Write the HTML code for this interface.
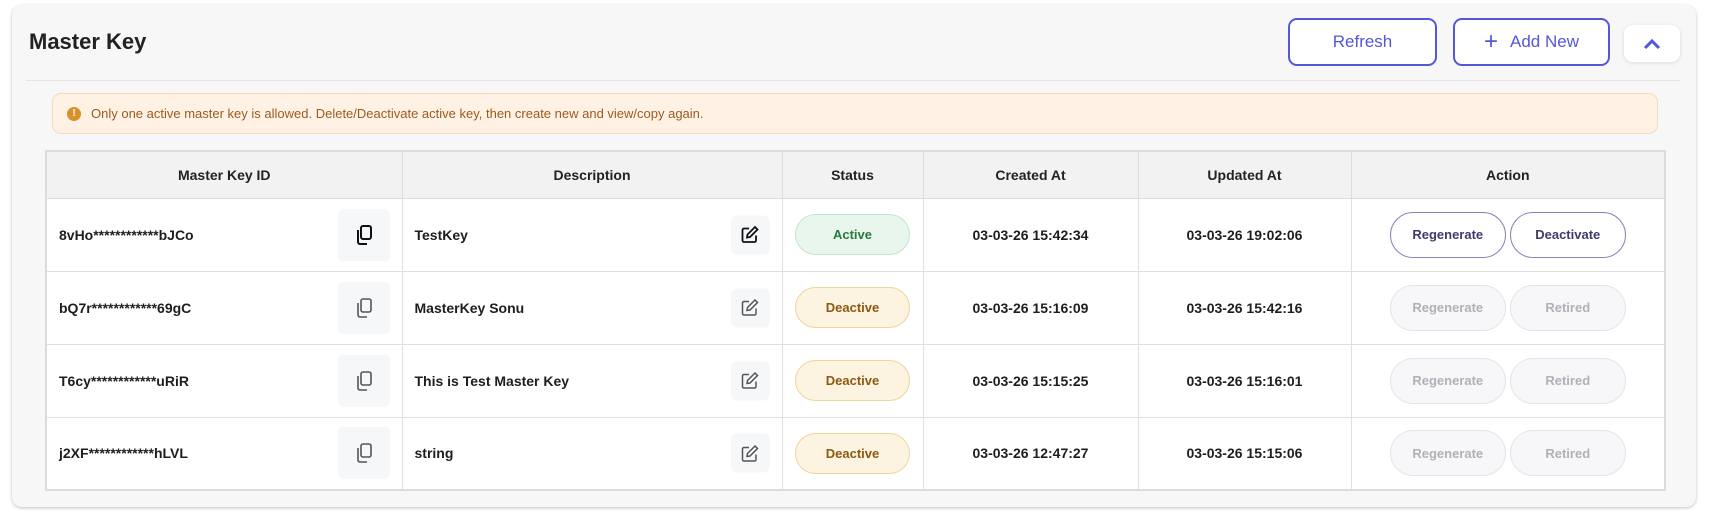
<!DOCTYPE html>
<html><head><meta charset="utf-8"><style>
*{box-sizing:border-box;margin:0;padding:0}
body{width:1713px;height:517px;background:#fff;font-family:"Segoe UI","Liberation Sans",sans-serif;position:relative;overflow:hidden}
.card{position:absolute;left:12px;top:5px;width:1684px;height:502px;background:#f7f7f7;border-radius:10px;box-shadow:0 1px 3px rgba(0,0,0,.25)}
.title{position:absolute;left:29px;top:29px;font-size:22px;font-weight:600;color:#222}
.btn{position:absolute;top:18px;height:48px;border:2px solid #5457d6;border-radius:9px;background:#fff;color:#5457d6;font-size:17px;display:flex;align-items:center;justify-content:center;font-family:"Liberation Sans",sans-serif}
.chev{position:absolute;left:1624px;top:25px;width:56px;height:37px;background:#fff;border-radius:9px;box-shadow:0 1px 4px rgba(0,0,0,.12);display:flex;align-items:center;justify-content:center}
.div{position:absolute;left:26px;top:80px;width:1654px;height:1px;background:#e3e3e3}
.alert{position:absolute;left:52px;top:93px;width:1606px;height:41px;background:#fff2e4;border:1px solid #f5dab6;border-radius:9px;display:flex;align-items:center;padding-left:14px;font-size:13px;color:#9a5b1e}
.alert .ic{width:14px;height:14px;border-radius:50%;background:#d8922c;color:#fff;font-size:10px;font-weight:bold;display:flex;align-items:center;justify-content:center;margin-right:10px}
table{position:absolute;left:45px;top:150px;width:1619px;border-collapse:collapse;background:#fff;border:2px solid #dcdcdc;table-layout:fixed}
th{height:47px;background:#f2f2f2;font-size:14px;font-weight:600;color:#222;border:1px solid #dcdcdc}
td{height:73px;border:1px solid #e0e0e0;font-size:14px;font-weight:600;color:#1e1e1e;text-align:center;position:relative}
td.l{text-align:left;padding-left:12px}
.ib{position:absolute;top:50%;transform:translateY(-50%);background:#f6f7f9;border-radius:6px;display:flex;align-items:center;justify-content:center}
.cp{right:12px;width:52px;height:52px}
.ed{right:12px;width:39px;height:39px}
.pill{display:inline-flex;align-items:center;justify-content:center;width:115px;height:41px;border-radius:21px;font-size:13px;font-weight:600}
.act{background:#e8f6ed;border:1px solid #c2e6cd;color:#2a7a3e}
.dea{background:#fdf3e1;border:1px solid #f1d49a;color:#8a5a10}
.ab{display:inline-flex;align-items:center;justify-content:center;width:116px;height:46px;border-radius:23px;font-size:13px;font-weight:600;margin:0 2px}
.on{border:1px solid #8a84b8;color:#3f3b6e;background:#fff}
.off{border:1px solid #e4e4ea;color:#b0b0b8;background:#f7f7f9}
</style></head><body>
<div class="card"></div>
<div class="title">Master Key</div>
<div class="btn" style="left:1288px;width:149px">Refresh</div>
<div class="btn" style="left:1453px;width:157px"><span style="font-size:24px;margin-right:12px;line-height:1">+</span>Add New</div>
<div class="chev"><svg width="18" height="12" viewBox="0 0 18 12"><path d="M2 10 L9 3 L16 10" stroke="#5457d6" stroke-width="3" fill="none"/></svg></div>
<div class="div"></div>
<div class="alert"><div class="ic">!</div>Only one active master key is allowed. Delete/Deactivate active key, then create new and view/copy again.</div>
<table>
<colgroup><col style="width:356px"><col style="width:380px"><col style="width:141px"><col style="width:215px"><col style="width:213px"><col style="width:314px"></colgroup>
<tr><th>Master Key ID</th><th>Description</th><th>Status</th><th>Created At</th><th>Updated At</th><th>Action</th></tr>
<tr><td class="l">8vHo************bJCo<div class="ib cp"><svg width="20" height="22" viewBox="0 0 20 22"><rect x="7" y="2" width="10" height="13" rx="2" fill="none" stroke="#111" stroke-width="2"/><path d="M4 6 V18 a2 2 0 0 0 2 2 H13" fill="none" stroke="#111" stroke-width="2"/></svg></div></td>
<td class="l">TestKey<div class="ib ed"><svg width="18" height="18" viewBox="0 0 18 18"><path d="M8 3 H3 a1.5 1.5 0 0 0 -1.5 1.5 V15 a1.5 1.5 0 0 0 1.5 1.5 H13.5 a1.5 1.5 0 0 0 1.5 -1.5 V10" fill="none" stroke="#111" stroke-width="1.8"/><path d="M14 1.5 L16.5 4 L9 11.5 L6 12 L6.5 9 Z" fill="none" stroke="#111" stroke-width="1.8"/></svg></div></td>
<td><span class="pill act">Active</span></td><td>03-03-26 15:42:34</td><td>03-03-26 19:02:06</td>
<td><span class="ab on">Regenerate</span><span class="ab on">Deactivate</span></td></tr>
<tr><td class="l">bQ7r************69gC<div class="ib cp"><svg width="20" height="22" viewBox="0 0 20 22"><rect x="7" y="2" width="10" height="13" rx="2" fill="none" stroke="#555" stroke-width="1.6"/><path d="M4 6 V18 a2 2 0 0 0 2 2 H13" fill="none" stroke="#555" stroke-width="1.6"/></svg></div></td>
<td class="l">MasterKey Sonu<div class="ib ed"><svg width="18" height="18" viewBox="0 0 18 18"><path d="M8 3 H3 a1.5 1.5 0 0 0 -1.5 1.5 V15 a1.5 1.5 0 0 0 1.5 1.5 H13.5 a1.5 1.5 0 0 0 1.5 -1.5 V10" fill="none" stroke="#555" stroke-width="1.5"/><path d="M14 1.5 L16.5 4 L9 11.5 L6 12 L6.5 9 Z" fill="none" stroke="#555" stroke-width="1.5"/></svg></div></td>
<td><span class="pill dea">Deactive</span></td><td>03-03-26 15:16:09</td><td>03-03-26 15:42:16</td>
<td><span class="ab off">Regenerate</span><span class="ab off">Retired</span></td></tr>
<tr><td class="l">T6cy************uRiR<div class="ib cp"><svg width="20" height="22" viewBox="0 0 20 22"><rect x="7" y="2" width="10" height="13" rx="2" fill="none" stroke="#555" stroke-width="1.6"/><path d="M4 6 V18 a2 2 0 0 0 2 2 H13" fill="none" stroke="#555" stroke-width="1.6"/></svg></div></td>
<td class="l">This is Test Master Key<div class="ib ed"><svg width="18" height="18" viewBox="0 0 18 18"><path d="M8 3 H3 a1.5 1.5 0 0 0 -1.5 1.5 V15 a1.5 1.5 0 0 0 1.5 1.5 H13.5 a1.5 1.5 0 0 0 1.5 -1.5 V10" fill="none" stroke="#555" stroke-width="1.5"/><path d="M14 1.5 L16.5 4 L9 11.5 L6 12 L6.5 9 Z" fill="none" stroke="#555" stroke-width="1.5"/></svg></div></td>
<td><span class="pill dea">Deactive</span></td><td>03-03-26 15:15:25</td><td>03-03-26 15:16:01</td>
<td><span class="ab off">Regenerate</span><span class="ab off">Retired</span></td></tr>
<tr><td class="l">j2XF************hLVL<div class="ib cp"><svg width="20" height="22" viewBox="0 0 20 22"><rect x="7" y="2" width="10" height="13" rx="2" fill="none" stroke="#555" stroke-width="1.6"/><path d="M4 6 V18 a2 2 0 0 0 2 2 H13" fill="none" stroke="#555" stroke-width="1.6"/></svg></div></td>
<td class="l">string<div class="ib ed"><svg width="18" height="18" viewBox="0 0 18 18"><path d="M8 3 H3 a1.5 1.5 0 0 0 -1.5 1.5 V15 a1.5 1.5 0 0 0 1.5 1.5 H13.5 a1.5 1.5 0 0 0 1.5 -1.5 V10" fill="none" stroke="#555" stroke-width="1.5"/><path d="M14 1.5 L16.5 4 L9 11.5 L6 12 L6.5 9 Z" fill="none" stroke="#555" stroke-width="1.5"/></svg></div></td>
<td><span class="pill dea">Deactive</span></td><td>03-03-26 12:47:27</td><td>03-03-26 15:15:06</td>
<td><span class="ab off">Regenerate</span><span class="ab off">Retired</span></td></tr>
</table>
</body></html>
